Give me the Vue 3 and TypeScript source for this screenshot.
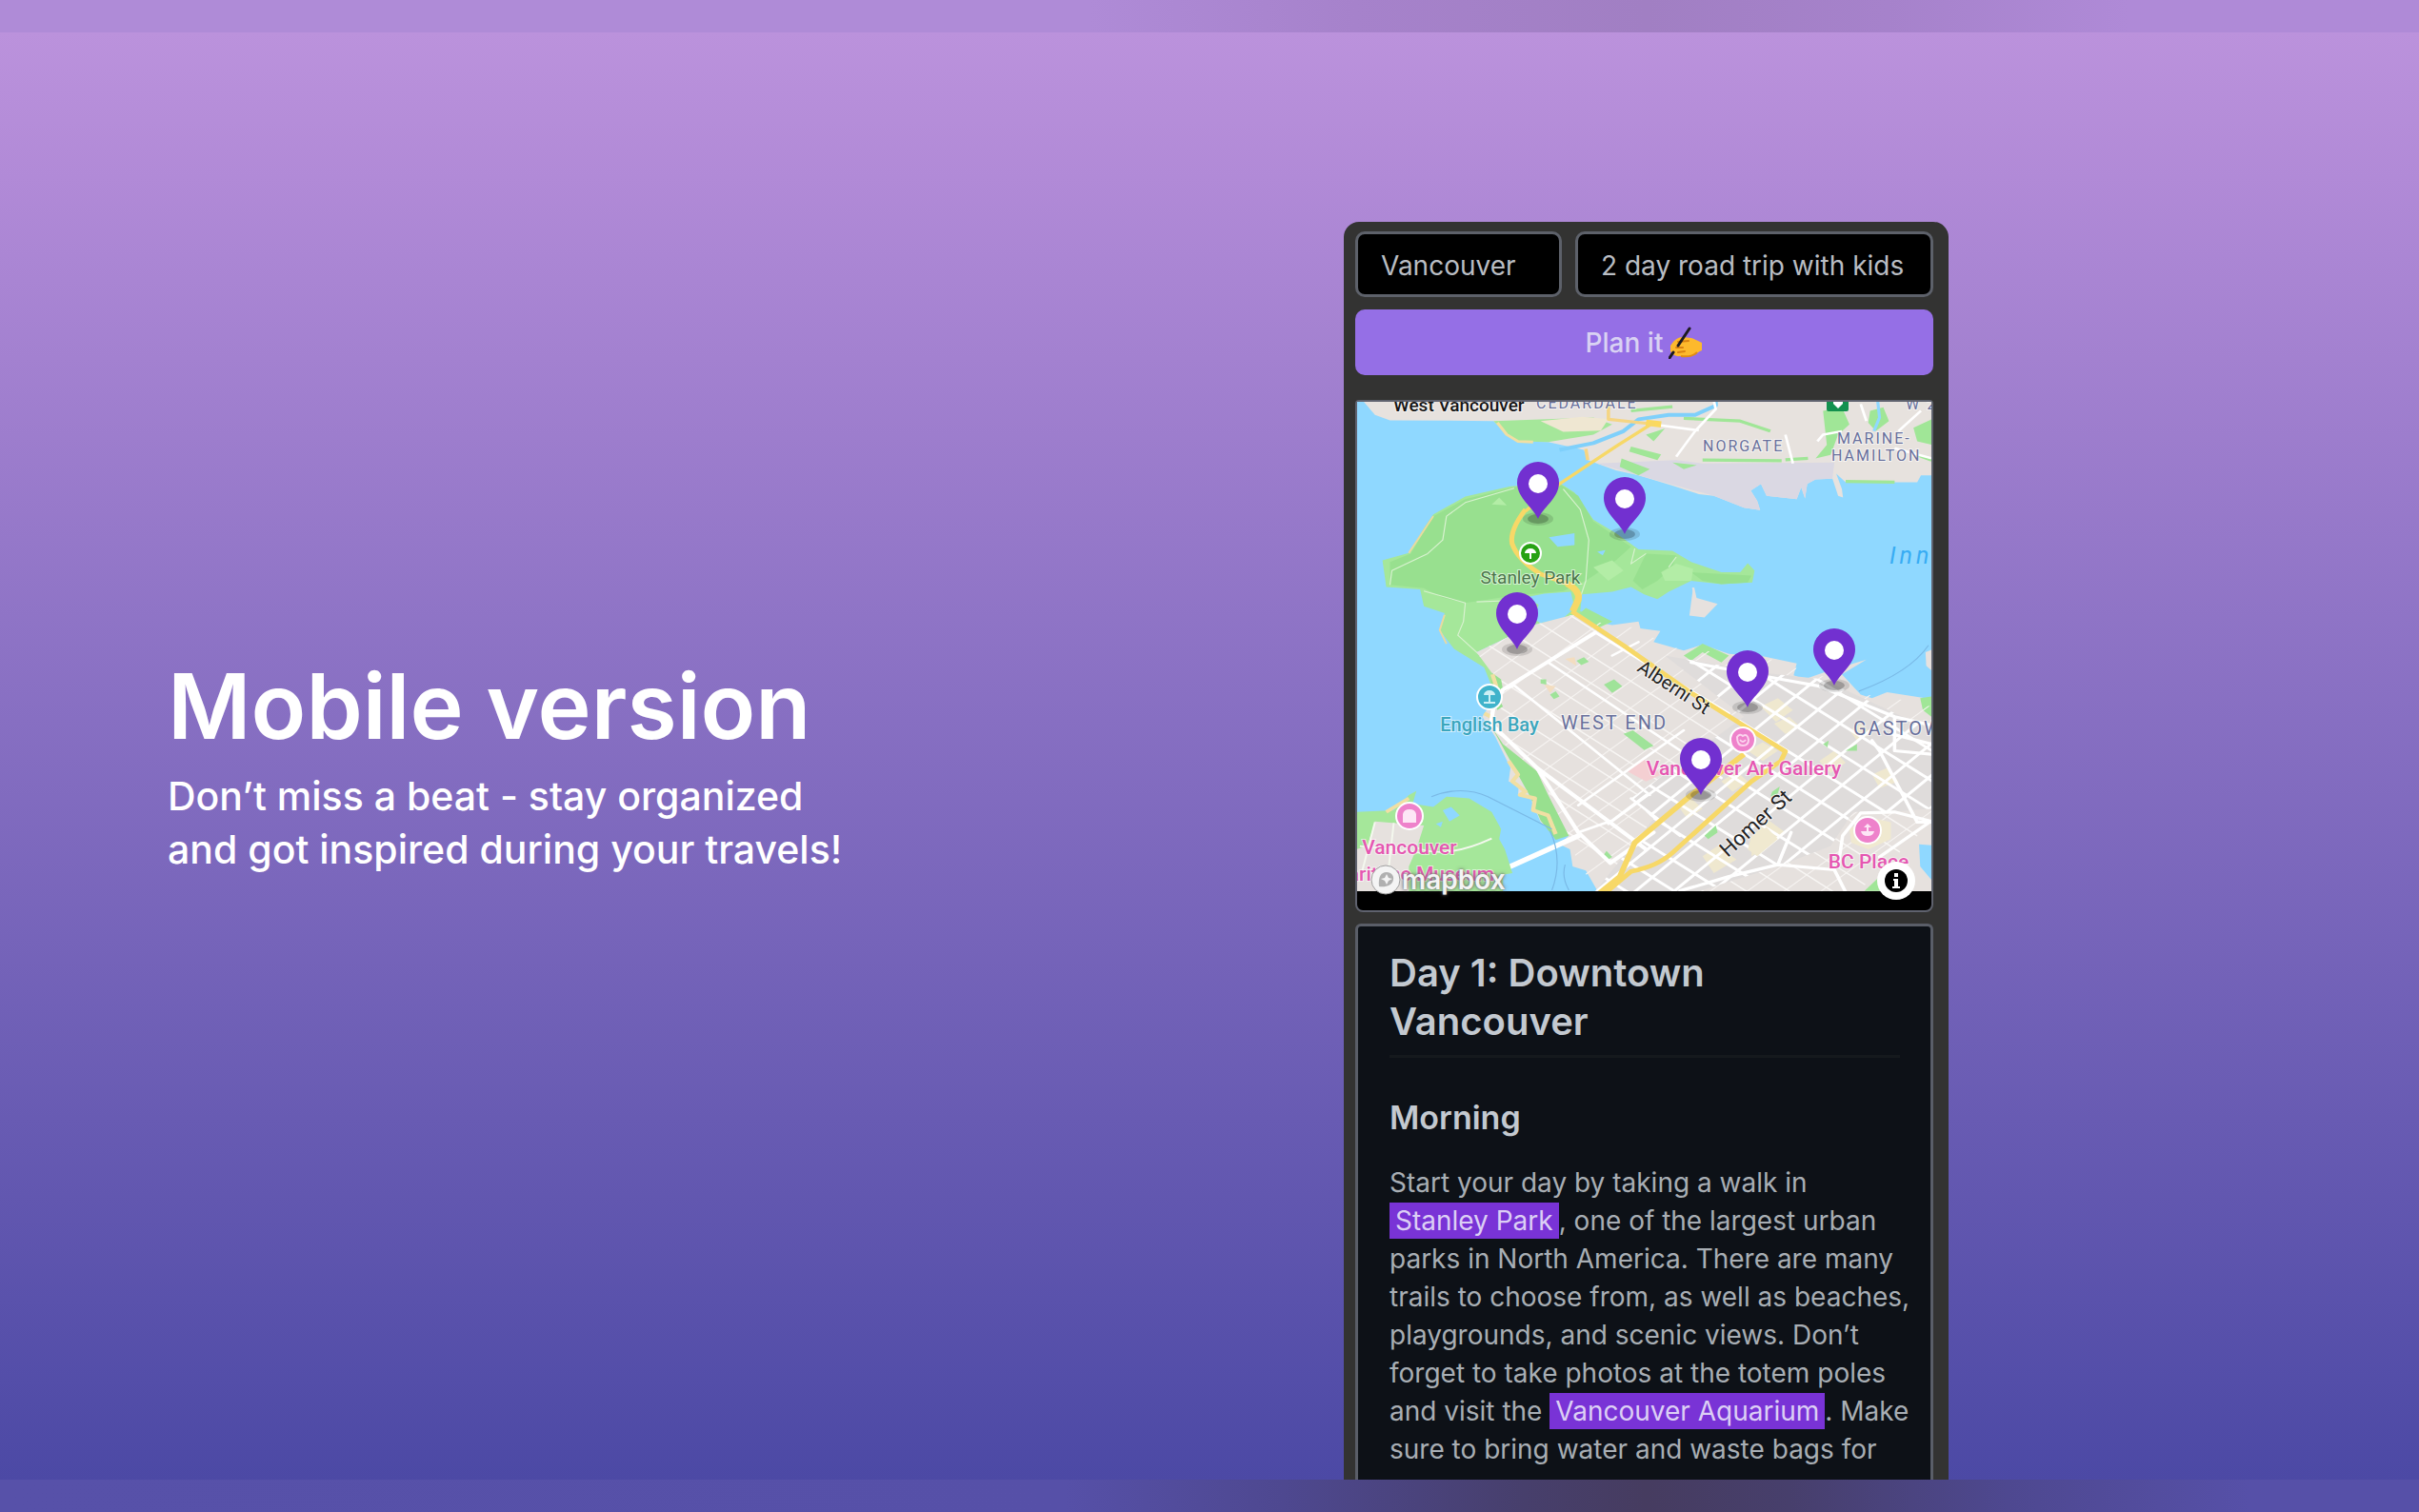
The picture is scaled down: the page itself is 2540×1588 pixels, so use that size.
<script setup lang="ts">
import { ref } from 'vue'

interface Pin {
  x: number
  y: number
}

const city = ref('Vancouver')
const trip = ref('2 day road trip with kids')

const pins: Pin[] = [
  { x: 190, y: 125 },
  { x: 281, y: 141 },
  { x: 168, y: 262 },
  { x: 410, y: 323 },
  { x: 501, y: 300 },
  { x: 361, y: 415 },
]

// Parallel streets: each line starts at (x, y), shifted by (sx, sy) per street, and runs both ways along (dx, dy).
function streets(count: number, x: number, y: number, sx: number, sy: number, dx: number, dy: number): string {
  return Array.from({ length: count }, (_, i) => {
    const cx = x + sx * i
    const cy = y + sy * i
    return `M${cx - dx},${cy - dy}L${cx + dx},${cy + dy}`
  }).join('')
}

const crossStreets = streets(19, 330, 790, 52, 37, 760, -610)
const longStreets = streets(9, 690, 740, -46, 48, 810, 570)
const eastCross = streets(14, 560, 1180, 72, 28, 760, -690)
const eastLong = streets(14, 1250, 860, -50, 54, 810, 560)
</script>

<template>
  <div class="page">
    <div class="band band-top"></div>
    <main class="stage">
      <section class="copy">
        <h1>Mobile version</h1>
        <p>Don’t miss a beat - stay organized<br />and got inspired during your travels!</p>
      </section>

      <section class="phone" aria-label="Trip planner">
        <form class="planner" @submit.prevent>
          <div class="fields">
            <input v-model="city" type="text" aria-label="City" />
            <input v-model="trip" type="text" aria-label="Trip" />
          </div>
          <button type="submit" class="plan">
            <span>Plan it</span>
            <svg class="hand" viewBox="0 0 36 34" aria-hidden="true">
              <path d="M2 20 C6 14 10 11 15 11 L24 12 C27 13 29 14 31 15 L35 17 L35 25 C31 26 29 30 23 31 L12 31 C7 32 3 28 2 26 Z" fill="#fdb92c" />
              <path d="M10 16 L21 15 M8 22 L15 22 M10 27 L17 26" stroke="#d98212" stroke-width="2" stroke-linecap="round" fill="none" />
              <path d="M13 31 C20 32 26 31 30 27" stroke="#e08c14" stroke-width="2" fill="none" />
              <path d="M22 2 L10 20 M5 27 L1 33" stroke="#1d1a20" stroke-width="3" stroke-linecap="round" />
            </svg>
          </button>
        </form>

        <div class="map">
          <svg class="tiles" viewBox="0 2 603 514" role="img" aria-label="Map of Vancouver">
            <defs>
              <clipPath id="land">
                <path d="M330,770 L480,690 L585,660 L640,680 L700,690 L765,700 L815,740 L880,765 L930,760 L1000,790 L1090,785 L1180,810 L1175,840 L1200,850 L1250,840 L1290,860 L1350,895 L1420,900 L1538,930 L1538,1340 L1505,1340 L1505,1400 L1480,1480 L655,1480 L600,1390 L570,1310 L500,1130 L380,1020 L370,960 L400,880 Z" />
              </clipPath>
              <clipPath id="east">
                <path d="M830,780 L1090,830 L1250,850 L1538,1000 L1538,1230 L1430,1240 L1330,1240 L1270,1340 L1130,1400 L900,1480 L640,1480 L800,1260 L740,1200 L1040,960 Z" />
              </clipPath>
            </defs>
            <g transform="translate(-5 -10) scale(0.3954 0.3571)" fill="none" stroke-linejoin="round">
              <rect x="0" y="0" width="1560" height="1490" fill="#8fd8ff" />

              <!-- north shore -->
              <path d="M20,20 L60,72 L100,88 L375,90 L410,130 L440,150 L520,152 L615,175 L625,205 L700,235 L760,250 L850,280 L920,305 L960,310 L1040,345 L1083,352 L1075,325 L1058,295 L1085,275 L1100,310 L1180,320 L1192,285 L1202,318 L1208,275 L1230,262 L1275,260 L1290,310 L1303,315 L1300,290 L1285,245 L1310,270 L1500,270 L1510,250 L1560,250 L1560,20 Z" fill="#e7e2de" />
              <path d="M650,215 L860,205 L930,215 L1280,212 L1275,260 L1230,262 L1208,275 L1202,318 L1192,285 L1180,320 L1100,310 L1085,275 L1058,295 L1075,325 L1083,352 L1040,345 L960,310 L760,250 Z" fill="#dad8e3" />
              <path d="M375,90 L640,80 L690,100 L640,130 L520,152 L440,150 L410,130 Z" fill="#a5e79a" />
              <path d="M500,90 L610,78 L680,84 L660,118 L560,122 Z" fill="#efe7d2" />
              <path d="M385,95 L410,130 L440,150 L480,152" stroke="#f1dfa3" stroke-width="8" />
              <path d="M1250,60 L1300,50 L1320,100 L1290,130 L1270,190 L1230,200 L1260,160 Z M1375,60 L1410,50 L1425,90 L1390,120 L1370,95 Z M1490,110 L1538,85 L1538,160 L1500,150 Z M740,165 L820,188 L810,205 L735,180 Z M715,200 L790,232 L760,250 L710,225 Z M850,212 L915,220 L880,232 Z M780,130 L830,112 L800,150 Z" fill="#a0e697" />
              <path d="M880,82 L1030,90 L1110,120 M930,205 L1140,207 M1310,268 L1440,270 M740,60 L850,48 M1150,204 L1210,200 M1500,190 L1538,205" stroke="#a0e697" stroke-width="9" />
              <path d="M550,175 L640,155 L720,120 L760,85 L840,72 L910,72 L965,45 L965,30" stroke="#7fd0fb" stroke-width="11" />
              <path d="M1395,30 L1400,80 L1385,120" stroke="#8fd8ff" stroke-width="8" />
              <path d="M860,195 L910,120 L965,55 L960,30 M800,100 L920,118 M1150,130 L1170,215 M1235,150 L1250,130 L1300,120 M1350,40 L1365,90 M1450,120 L1510,60 M1440,170 L1538,200" stroke="#fff" stroke-width="7" />
              <path d="M680,40 L680,85 L790,98 M620,172 L625,205" stroke="#f5d583" stroke-width="9" />
              <path d="M780,95 L820,100" stroke="#fbd95f" stroke-width="18" />

              <!-- Stanley Park -->
              <path d="M80,500 L150,478 L190,405 L215,365 L300,312 L420,282 L550,272 L590,300 L640,380 L700,420 L760,468 L850,472 L900,505 L980,535 L1030,535 L1050,508 L1068,530 L1062,565 L980,570 L900,560 L840,592 L810,614 L775,600 L740,578 L690,592 L610,600 L605,650 L690,680 L650,700 L585,662 L480,690 L330,770 L395,850 L400,900 L370,870 L350,815 L270,760 L232,705 L245,655 L190,635 L180,585 L90,578 Z" fill="#a5e79a" />
              <path d="M100,505 L155,480 L215,370 L300,320 L430,285 L550,275 L600,310 L640,385 L740,460 L700,500 L620,560 L560,590 L420,605 L300,625 L240,610 L190,582 L100,572 Z" fill="#98e08f" />
              <path d="M780,480 L860,485 L850,520 L810,560 L770,585 L745,560 Z M900,535 L1060,545 L1050,565 L980,570 L930,560 Z" fill="#98e08f" />
              <path d="M820,535 L860,510 L905,525 L900,560 L830,560 Z M640,520 L690,500 L720,530 L680,560 Z M370,335 L390,315 L410,338 Z" fill="#b3eda6" />
              <path d="M455,610 L510,598 L580,592 L590,640 L560,670 L500,684 L480,672 L495,630 Z M522,432 L590,420 L590,455 L545,460 Z M650,475 L672,470 L665,485 Z" fill="#8fd8ff" />
              <path d="M215,370 L150,478 M245,660 L232,705 L250,745" stroke="#ead9a0" stroke-width="5" />
              <path d="M100,572 L105,530 L200,480 L240,440 L250,370 L300,330 L430,288 M560,290 L605,350 L628,440 L620,560 L605,610 M190,590 L300,625 L295,680 L280,720 L340,780 M330,622 L420,618 M750,465 L740,510 L780,480 M860,490 L840,520" stroke="#d9f2d0" stroke-width="3" />

              <!-- downtown peninsula -->
              <path d="M330,770 L480,690 L585,660 L640,680 L690,690 L760,680 L765,700 L818,708 L800,740 L880,765 L930,748 L1000,775 L1090,782 L1180,803 L1172,838 L1200,850 L1250,830 L1365,792 L1300,835 L1350,895 L1380,905 L1420,888 L1560,912 L1560,1340 L1505,1335 L1508,1400 L1538,1440 L1538,1480 L655,1480 L620,1412 L585,1400 L578,1350 L550,1335 L575,1310 L540,1310 L500,1270 L470,1192 L440,1190 L442,1160 L415,1150 L420,1110 L380,1020 L345,960 L375,910 L370,830 Z" fill="#e6e1de" />
              <path d="M905,580 L912,610 L970,628 L935,668 L895,662 Z" fill="#e6e1de" />
              <path d="M905,580 L912,615" stroke="#e6e1de" stroke-width="6" />
              <path d="M880,780 L930,745 L1000,780 L980,800 L930,770 L900,795 Z M1508,905 L1538,900 L1538,960 L1515,940 Z M1360,1472 L1400,1430 L1450,1440 L1440,1472 Z M620,640 L690,680 L650,700 L600,660 Z" fill="#a0e697" />
              <path d="M1522,770 L1545,760 L1545,830 L1524,810 Z" fill="#e6e1de" />

              <g clip-path="url(#land)">
                <path :d="crossStreets" stroke="#f6f3f1" stroke-width="3" />
                <path :d="longStreets" stroke="#f8f6f4" stroke-width="4" />
              </g>
              <g clip-path="url(#east)">
                <path d="M820,760 H1540 V1480 H600 Z" fill="#dfdcdb" />
                <path d="M1085,930 L1130,905 L1170,940 L1125,975 Z M1090,1035 L1130,1060 L1090,1090 L1050,1060 Z M980,1150 L1020,1120 L1050,1150 L1010,1180 Z M1240,1090 L1280,1060 L1310,1095 L1270,1125 Z M1060,1320 L1100,1260 L1150,1300 L1060,1370 Z M870,1230 L900,1200 L930,1230 L890,1260 Z M1120,980 L1160,960 L1190,990 L1150,1010 Z M930,1370 L970,1340 L1020,1380 L960,1420 Z M1320,1000 L1350,980 L1380,1010 L1340,1030 Z M1380,1130 L1420,1110 L1450,1150 L1400,1170 Z" fill="#efe8cf" />
                <path :d="eastCross" stroke="#fff" stroke-width="8" />
                <path :d="eastLong" stroke="#fff" stroke-width="8" />
              </g>

              <path d="M1320,1290 L1370,1255 L1430,1270 L1430,1320 L1370,1350 L1325,1330 Z M1060,1310 L1100,1285 L1130,1320 L1075,1370 L1050,1350 Z" fill="#f0e9d0" />
              <path d="M720,1010 L745,1000 L800,1045 L775,1058 Z M668,865 L695,850 L717,870 L690,890 Z M500,850 L515,850 L515,865 L500,862 Z M595,795 L615,785 L628,798 L608,808 Z M525,895 L540,885 L550,900 L535,908 Z M935,1310 L965,1280 L970,1300 L945,1320 Z M1115,1180 L1135,1165 L1130,1185 L1110,1195 Z M1250,1040 L1265,1030 L1262,1050 Z M1310,1060 L1340,1040 L1340,1060 Z M665,1370 L675,1355 L690,1372 L680,1380 Z" fill="#9fe399" />
              <path d="M565,790 L590,785 L595,810 Z M510,865 L540,870 L525,890 Z" fill="#f3ddc0" />
              <path d="M730,1120 L775,1085 L820,1130 L780,1150 Z" fill="#f4cfd2" />
              <path d="M370,990 L400,1040 L490,1120 L520,1190 L575,1310 L540,1322 L500,1265 L470,1190 L430,1110 Z M370,830 L395,850 L400,880 L385,900 L400,930 L385,940 L370,900 Z" fill="#98e08f" />
              <path d="M372,835 L382,870 L370,900 M350,950 L368,960 M415,1090 L440,1130 L425,1150 L460,1180 L445,1190 L485,1200 L480,1235 L520,1250 L540,1305" stroke="#f1dfa3" stroke-width="11" />

              <g stroke="#fff" stroke-linecap="round">
                <path d="M645,712 L400,880 L375,930 L368,980 L490,1110 L780,1350 M490,1110 L600,1300 L685,1390 L800,1300" stroke-width="11" />
                <path d="M400,880 L430,868 L790,1190 M520,800 L980,1140 M645,712 L760,790 L1000,950 M600,1220 L880,1000 M680,1275 L860,1130 M600,1300 L690,1265 L780,1190 M740,1200 L870,1310 M690,780 L760,740" stroke-width="7" />
                <path d="M360,1430 L600,1310" stroke-width="15" />
                <path d="M870,1472 L1000,1430 L1130,1395 L1280,1410 L1312,1480 M1130,1395 L1165,1300 M1380,1030 L1400,1060 L1500,1270 L1545,1270 M1538,1268 L1440,1240 L1350,1243 L1302,1310 L1290,1400 M1530,1272 L1400,1372 M1240,870 L1440,960 L1538,985 M1430,1010 L1538,1040 M1440,960 L1440,1060 L1538,1070 M900,800 L1140,850 L1240,870" stroke-width="9" />
              </g>

              <!-- highway -->
              <g stroke="#f7d867">
                <path d="M800,95 L700,165 L550,275 L460,355" stroke-width="9" />
                <path d="M460,350 Q418,410 424,450 Q440,500 500,540 L570,568" stroke-width="13" />
                <path d="M570,568 Q605,590 600,615 L585,650" stroke-width="18" />
                <path d="M583,650 L720,750 L900,890 L1150,1062 L1138,1090 L1060,1150 L850,1360 Q810,1400 740,1415 L670,1480" stroke-width="13" />
                <path d="M1040,1070 L900,1190 L750,1330 L710,1430 L655,1480" stroke-width="15" />
              </g>

              <!-- Kitsilano point -->
              <path d="M10,1240 L110,1235 L150,1190 L170,1178 L160,1215 L215,1225 L250,1195 L310,1200 L370,1240 L395,1290 L390,1320 L405,1350 L425,1420 L400,1425 L400,1480 L10,1480 Z" fill="#a5e79a" />
              <path d="M240,1235 L262,1225 L285,1250 L258,1268 Z M222,1275 L240,1268 L235,1285 Z" fill="#8fd8ff" />
              <path d="M60,1268 L190,1280 L170,1350 L150,1400 L150,1480 L10,1480 L10,1350 L40,1340 Z" fill="#e6e1de" />
              <path d="M90,1240 L150,1200" stroke="#f1dfa3" stroke-width="10" />
              <path d="M170,1345 Q250,1380 370,1318 M20,1340 L180,1360 M60,1270 L20,1440 M110,1272 L90,1470" stroke="#f4f8ee" stroke-width="5" />
              <path d="M210,1195 Q290,1160 360,1195 L530,1290 M525,1295 Q560,1380 530,1470 M565,1395 Q555,1430 575,1470 M1345,885 Q1480,830 1530,750" stroke="#7ab9e6" stroke-width="3" />
            </g>

            <rect x="493" y="-6" width="23" height="18" rx="2" fill="#13914f" />
            <path d="M500 2 H510 V4 L505 9 L500 4 Z" fill="#fff" />

            <g class="label">
              <text x="38" y="12" class="place">West Vancouver</text>
              <text x="188" y="9" class="area small">CEDARDALE</text>
              <text x="363" y="54" class="area small">NORGATE</text>
              <text x="504" y="46" class="area small">MARINE-</text>
              <text x="498" y="64" class="area small">HAMILTON</text>
              <text x="576" y="10" class="area small">W 23</text>
              <text x="559" y="172" class="inlet">Inner</text>
              <text x="270" y="346" class="area mid">WEST END</text>
              <text x="521" y="352" class="area">GASTOWN</text>
              <text transform="translate(293 284) rotate(33)" class="street">Alberni St</text>
              <text transform="translate(389 481) rotate(-42)" class="street big">Homer St</text>
              <text x="182" y="193" class="park mid">Stanley Park</text>
              <text x="139" y="348" class="bay mid">English Bay</text>
              <text x="406" y="394" class="poi mid">Vancouver Art Gallery</text>
              <text x="537" y="492" class="poi mid">BC Place</text>
              <text x="55" y="477" class="poi mid">Vancouver</text>
              <text x="144" y="505" class="poi end">Maritime Museum</text>
            </g>

            <g stroke="#fff" stroke-width="2">
              <circle cx="182" cy="161" r="11" fill="#28a214" />
              <circle cx="139" cy="312" r="13" fill="#40b3cb" />
              <circle cx="55" cy="437" r="14" fill="#ee82cb" />
              <circle cx="405" cy="357" r="13" fill="#ee82cb" />
              <circle cx="536" cy="452" r="14" fill="#ee82cb" />
            </g>
            <path d="M176 161 A6 5 0 0 1 188 161 Z M181 161 H183 V167 H181 Z" fill="#fff" />
            <path d="M133 310 A6 5 0 0 1 145 310 Z M138 310 H140 V317 H138 Z M133 317 H145 V319 H133 Z" fill="#cdf0f5" />
            <path d="M48 444 V435 Q49 430 55 430 Q61 430 62 435 V444 Z" fill="#fde6f6" />
            <path d="M399 354 Q402 350 405 353 Q410 350 411 357 Q411 363 405 363 Q399 363 399 354 Z M402 357 Q405 361 408 357" fill="none" stroke="#fbd3ee" stroke-width="2" />
            <path d="M529 453 H543 Q542 458 536 458 Q530 458 529 453 Z M535 446 H537 V453 H535 Z M532 449 L536 445 L540 449 Z" fill="#fde6f6" />

            <g v-for="(pin, i) in pins" :key="i" :transform="`translate(${pin.x} ${pin.y})`">
              <ellipse cx="0" cy="0" rx="16" ry="7" fill="#000" opacity="0.12" />
              <ellipse cx="0" cy="0" rx="11" ry="5" fill="#000" opacity="0.22" />
              <path d="M0 0 C-5 -12 -22 -22 -22 -38 A22 22 0 0 1 22 -38 C22 -22 5 -12 0 0 Z" fill="#7230d0" />
              <circle cx="0" cy="-37" r="10" fill="#fff" />
            </g>
          </svg>
          <a href="#mapbox" class="brand">
            <svg viewBox="0 0 34 34" aria-hidden="true">
              <circle cx="17" cy="17" r="15" fill="#f4f4f4" stroke="#a0a0a0" stroke-width="1" />
              <path d="M10 24 C9 14 12 9 18 9 C23 9 26 13 25 17 C24 23 17 25 10 24 Z" fill="#b0b0b0" />
              <path d="M18 11 L20 15 L24 16 L20 18 L18 22 L16 18 L12 16 L16 15 Z" fill="#f4f4f4" />
            </svg>
            <span>mapbox</span>
          </a>
          <button type="button" class="info" aria-label="Map information">
            <svg viewBox="0 0 40 40" aria-hidden="true">
              <circle cx="20" cy="20" r="12" fill="#000" />
              <path d="M18 12 H22 V16 H18 Z M17 18 H22 V26 H24 V28 H16 V26 H18 V20 H17 Z" fill="#fff" />
            </svg>
          </button>
        </div>

        <article class="plan-text">
          <h2>Day 1: Downtown Vancouver</h2>
          <h3>Morning</h3>
          <p>
            Start your day by taking a walk in <mark>Stanley Park</mark>, one of the largest urban parks in North
            America. There are many trails to choose from, as well as beaches, playgrounds, and scenic views. Don’t
            forget to take photos at the totem poles and visit the <mark>Vancouver Aquarium</mark>. Make sure to bring
            water and waste bags for
          </p>
        </article>
      </section>
    </main>
    <div class="band band-bottom"></div>
  </div>
</template>

<style>
body {
  margin: 0;
}
</style>

<style scoped>
.page {
  display: flex;
  flex-direction: column;
  height: 100vh;
  overflow: hidden;
  font-family: Inter, "Liberation Sans", sans-serif;
}

.page * {
  box-sizing: border-box;
}

.band {
  flex: 0 0 34px;
}

.band-top {
  background: linear-gradient(90deg, #af8bd7 0%, #af8bd7 45%, #a682cb 56%, #a17fc3 68%, #a682cb 78%, #af8ad7 88%, #af8ad7 100%);
}

.band-bottom {
  background: linear-gradient(90deg, #5751a9 0%, #5650a8 44%, #4e4890 53%, #473f6c 63%, #463c60 68%, #473f6c 74%, #4e4890 83%, #5650a8 93%, #5650a8 100%);
}

.stage {
  flex: 1;
  min-height: 0;
  overflow: hidden;
  display: grid;
  grid-template-columns: 1fr 25% 494px;
  grid-template-rows: 100%;
  background: linear-gradient(180deg, #bb92dc 0%, #b18ad7 10%, #4c49a5 100%);
}

.copy {
  align-self: center;
  padding: 26px 0 0 176px;
  color: #fff;
}

.copy h1 {
  margin: 0 0 18px;
  font-size: 95px;
  line-height: 96px;
  font-weight: 600;
}

.copy p {
  margin: 0;
  font-size: 41px;
  line-height: 56px;
  font-weight: 500;
}

.phone {
  display: flex;
  flex-direction: column;
  margin-top: 199px;
  padding: 10px 16px 0 12px;
  border-radius: 16px 16px 0 0;
  background: #333332;
  overflow: hidden;
}

.planner {
  display: flex;
  flex-direction: column;
  gap: 13px;
}

.fields {
  display: grid;
  grid-template-columns: 217fr 376fr;
  gap: 14px;
}

.fields input {
  min-width: 0;
  height: 69px;
  padding: 2px 24px 0;
  border: 3px solid #5d616a;
  border-radius: 10px;
  background: #000;
  color: #b9bdc3;
  font-family: inherit;
  font-size: 28px;
}

.plan {
  display: flex;
  align-items: center;
  justify-content: center;
  gap: 6px;
  height: 69px;
  padding: 0;
  border: 0;
  border-radius: 10px;
  background: #956fe6;
  color: #d9d2f3;
  font-family: inherit;
  font-size: 28px;
  font-weight: 500;
}

.hand {
  width: 36px;
  height: 34px;
}

.map {
  position: relative;
  flex: none;
  margin-top: 26px;
  padding-bottom: 20px;
  border: 2px solid #5f626e;
  border-radius: 4px 4px 8px 8px;
  background: #000;
}

.tiles {
  display: block;
  width: 100%;
}

.label {
  font-family: Roboto, "Liberation Sans", sans-serif;
  font-size: 20px;
  stroke: #fff;
  stroke-opacity: 0.6;
  stroke-width: 2px;
  paint-order: stroke;
}

.mid {
  text-anchor: middle;
}

.end {
  text-anchor: end;
}

.place {
  fill: #151515;
  font-size: 19px;
  font-weight: 500;
}

.area {
  fill: #68709c;
  letter-spacing: 2px;
}

.small {
  font-size: 16px;
}

.inlet {
  fill: #38acf3;
  stroke: none;
  font-size: 25px;
  font-style: italic;
  letter-spacing: 4px;
}

.street {
  fill: #222;
}

.big {
  font-size: 22px;
}

.park {
  fill: #4a7449;
  font-size: 19px;
}

.bay {
  fill: #3ba6bd;
  font-weight: 500;
}

.poi {
  fill: #e557b1;
  font-size: 21px;
  font-weight: 500;
}

.brand {
  position: absolute;
  left: 13px;
  bottom: 15px;
  display: flex;
  align-items: center;
  color: #f4f4f4;
  font-size: 28px;
  line-height: 34px;
  font-weight: 600;
  text-decoration: none;
  text-shadow: 0 0 4px #666, 0 0 2px #777;
}

.brand svg {
  width: 34px;
  height: 34px;
}

.info {
  position: absolute;
  right: 17px;
  bottom: 11px;
  width: 40px;
  height: 40px;
  padding: 0;
  border: 0;
  border-radius: 50%;
  background: #fff;
}

.info svg {
  display: block;
}

.plan-text {
  flex: 1 0 auto;
  margin-top: 12px;
  padding: 23px 16px 0 33px;
  border: 3px solid #5a5e68;
  border-bottom: 0;
  border-radius: 6px 6px 0 0;
  background: #0d1117;
  color: #a8aeb4;
}

.plan-text h2 {
  margin: 0 16px 42px 0;
  padding-bottom: 10px;
  border-bottom: 3px solid #15191d;
  color: #c3c9d0;
  font-size: 40px;
  line-height: 51px;
  font-weight: 600;
}

.plan-text h3 {
  margin: 0 0 27px;
  color: #c3c9d0;
  font-size: 34px;
  line-height: 42px;
  font-weight: 600;
}

.plan-text p {
  margin: 0;
  font-size: 28px;
  line-height: 40px;
}

.plan-text mark {
  padding: 2px 6px;
  background: #7933d6;
  color: #dccff5;
  white-space: nowrap;
}
</style>
